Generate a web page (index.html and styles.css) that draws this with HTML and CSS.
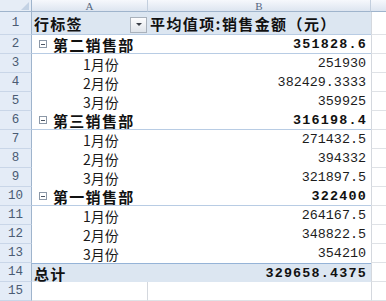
FILE: index.html
```html
<!DOCTYPE html>
<html lang="zh-CN">
<head>
<meta charset="utf-8">
<title>数据透视表</title>
<link rel="stylesheet" href="styles.css">
</head>
<body>
<div class="sheet">
  <div class="corner"><span class="tri"></span></div>
  <div class="ch">A</div>
  <div class="ch">B</div>
  <div class="ch ch-c"></div>

  <div class="rh">1</div>
  <div class="a head"><span>行标签</span><span class="dd"><span class="dd-tri"></span></span></div>
  <div class="b head head-b">平均值项:销售金额（元）</div>
  <div class="c"></div>

  <div class="rh">2</div>
  <div class="a grp"><span class="box"></span>第二销售部</div>
  <div class="b grp num-b">351828.6</div>
  <div class="c"></div>

  <div class="rh">3</div>
  <div class="a item">1月份</div>
  <div class="b num">251930</div>
  <div class="c"></div>

  <div class="rh">4</div>
  <div class="a item">2月份</div>
  <div class="b num">382429.3333</div>
  <div class="c"></div>

  <div class="rh">5</div>
  <div class="a item">3月份</div>
  <div class="b num">359925</div>
  <div class="c"></div>

  <div class="rh">6</div>
  <div class="a grp"><span class="box"></span>第三销售部</div>
  <div class="b grp num-b">316198.4</div>
  <div class="c"></div>

  <div class="rh">7</div>
  <div class="a item">1月份</div>
  <div class="b num">271432.5</div>
  <div class="c"></div>

  <div class="rh">8</div>
  <div class="a item">2月份</div>
  <div class="b num">394332</div>
  <div class="c"></div>

  <div class="rh">9</div>
  <div class="a item">3月份</div>
  <div class="b num">321897.5</div>
  <div class="c"></div>

  <div class="rh">10</div>
  <div class="a grp"><span class="box"></span>第一销售部</div>
  <div class="b grp num-b">322400</div>
  <div class="c"></div>

  <div class="rh">11</div>
  <div class="a item">1月份</div>
  <div class="b num">264167.5</div>
  <div class="c"></div>

  <div class="rh">12</div>
  <div class="a item">2月份</div>
  <div class="b num">348822.5</div>
  <div class="c"></div>

  <div class="rh">13</div>
  <div class="a item">3月份</div>
  <div class="b num">354210</div>
  <div class="c"></div>

  <div class="rh">14</div>
  <div class="a total">总计</div>
  <div class="b total num-b">329658.4375</div>
  <div class="c"></div>

  <div class="rh">15</div>
  <div class="a empty"></div>
  <div class="b empty"></div>
  <div class="c"></div>
</div>
</body>
</html>
```

FILE: styles.css
```css
html, body {
  margin: 0;
  padding: 0;
  background: #ffffff;
}

.sheet {
  display: grid;
  grid-template-columns: 32px 116px 223px 15px;
  grid-template-rows: 12px 23px repeat(14, 19px);
  width: 386px;
  height: 301px;
  overflow: hidden;
  font-family: "Noto Sans CJK SC", "Noto Sans", sans-serif;
  color: #111;
}

.sheet > div {
  box-sizing: border-box;
  display: flex;
  align-items: center;
  white-space: nowrap;
  overflow: hidden;
}

/* corner */
.corner {
  background: #e6edf6;
  border-right: 1px solid #9fb4cc;
  border-bottom: 1px solid #9fb4cc;
  justify-content: flex-end;
  align-items: flex-end !important;
  padding: 0 2px 1px 0;
}
.tri {
  width: 0;
  height: 0;
  border-left: 8px solid transparent;
  border-bottom: 8px solid #c3d2e4;
}

/* column headers */
.ch {
  justify-content: center;
  background: linear-gradient(#f6f8fc, #dde5f0);
  border-right: 1px solid #c3cfde;
  border-bottom: 1px solid #9fb4cc;
  font-family: "Liberation Serif", serif;
  font-size: 11px;
  line-height: 11px;
  color: #55677f;
  padding-top: 1px;
}
.ch-c {
  border-right: none;
}

/* row headers */
.rh {
  justify-content: center;
  background: #e4ecf7;
  border-right: 1px solid #9fb4cc;
  border-bottom: 1px solid #c9d6e8;
  font-family: "Liberation Mono", monospace;
  font-size: 12.5px;
  color: #4a5b73;
}

/* column C (outside pivot) */
.c {
  background: #fff;
  border-left: 1px solid #d4d8de;
  border-bottom: 1px solid #dfe2e6;
}

/* pivot cells */
.a, .b {
  background: #fff;
}

.head {
  background: #dce6f1 !important;
  border-bottom: 1px solid #b8cce4;
  font-weight: 700;
  font-size: 15px;
  letter-spacing: 1.2px;
}
.a.head {
  justify-content: space-between;
  padding-left: 2px;
}
.head-b {
  padding-left: 2px;
  letter-spacing: 1.4px;
}

.dd {
  box-sizing: border-box;
  width: 17px;
  height: 16px;
  margin-right: 1px;
  margin-top: 3px;
  border: 1px solid #a9b1bb;
  background: linear-gradient(#fdfdfe, #dfe4ea);
  display: flex;
  align-items: center;
  justify-content: center;
}
.dd-tri {
  width: 0;
  height: 0;
  border-left: 3px solid transparent;
  border-right: 3px solid transparent;
  border-top: 3px solid #3a3f47;
}

.grp {
  font-weight: 700;
  font-size: 15px;
  letter-spacing: 1.3px;
  border-bottom: 1px solid #b8cce4;
}
.a.grp {
  padding-left: 7px;
}
.box {
  box-sizing: border-box;
  width: 8px;
  height: 8px;
  margin-right: 6px;
  border: 1px solid #8c98a7;
  background: #fff;
  position: relative;
  flex: none;
}
.box::after {
  content: "";
  position: absolute;
  left: 1px;
  right: 1px;
  top: 2.5px;
  height: 1px;
  background: #4b5563;
}

.item {
  padding-left: 51px;
  font-size: 14px;
  color: #1a1a1a;
}

.num, .num-b {
  justify-content: flex-end;
  padding-right: 5px;
  font-family: "Liberation Mono", monospace;
  font-size: 13.4px;
  color: #1c1c1c;
}
.num-b {
  font-weight: 700;
  letter-spacing: 1.2px;
  padding-right: 4px;
  color: #111;
}

.total {
  background: #dce6f1 !important;
  border-top: 1px solid #95b3d7;
  font-weight: 700;
}
.a.total {
  padding-left: 2px;
  font-size: 15px;
  letter-spacing: 1.3px;
}

.a.empty {
  border-right: 1px solid #d4d8de;
  border-bottom: 1px solid #dfe2e6;
}
.b.empty {
  border-bottom: 1px solid #dfe2e6;
}
```
